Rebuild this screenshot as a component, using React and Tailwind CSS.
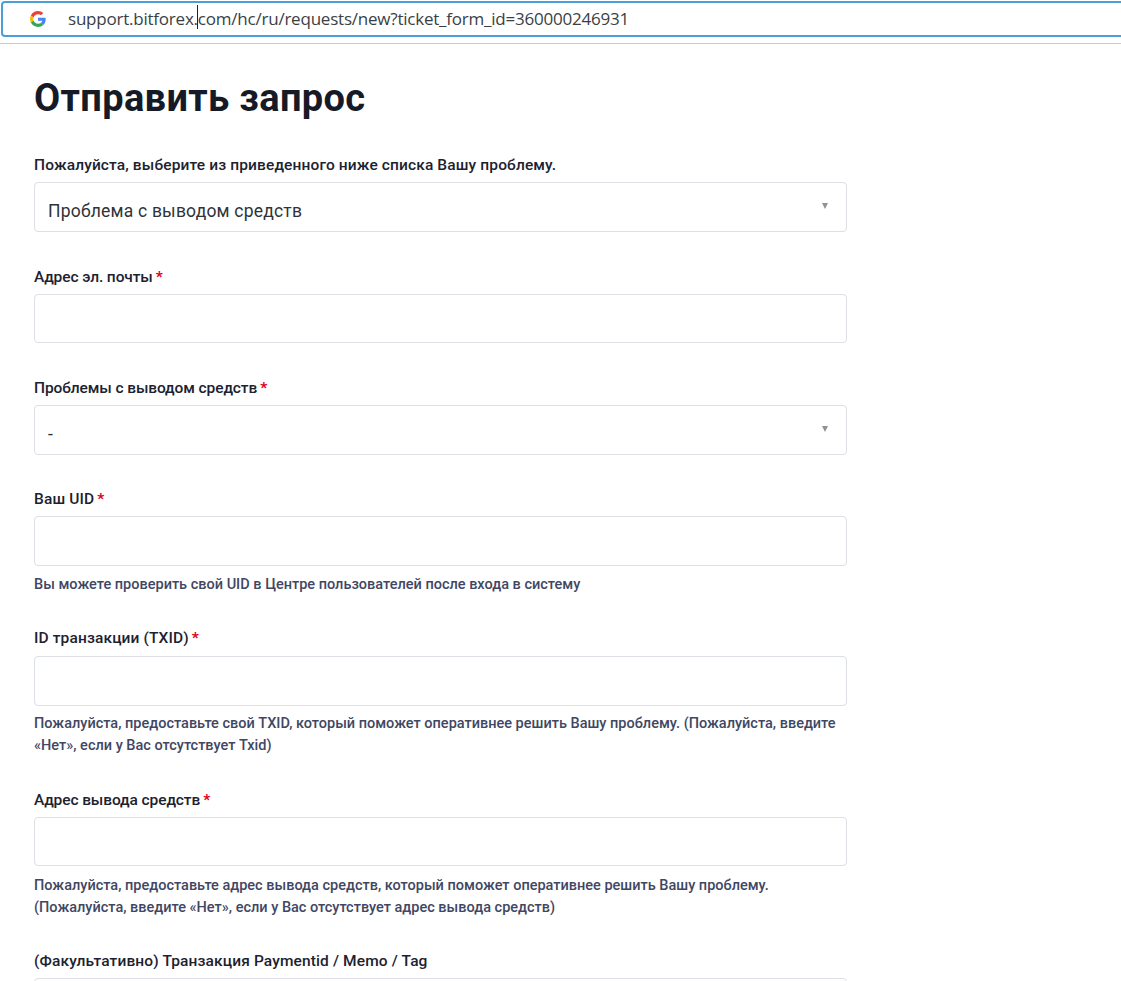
function GoogleIcon() {
  return (
    <svg width="16" height="16" viewBox="0 0 48 48">
      <path fill="#EA4335" d="M24 9.500c3.500 0 6.700 1.300 9.100 3.500l6.800-6.800C35.800 2.400 30.300 0 24 0 14.600 0 6.500 5.400 2.600 13.200l7.900 6.200C12.400 13.700 17.700 9.500 24 9.500z" />
      <path fill="#4285F4" d="M46.900 24.500c0-1.600-.1-3.100-.4-4.500H24v9h12.900c-.6 3-2.200 5.500-4.700 7.200l7.700 6c4.500-4.200 7-10.300 7-17.700z" />
      <path fill="#FBBC05" d="M10.500 28.600c-.5-1.400-.8-3-.8-4.600s.3-3.200.8-4.600l-7.900-6.200C.9 16.500 0 20.100 0 24s.9 7.500 2.600 10.800l7.900-6.200z" />
      <path fill="#34A853" d="M24 48c6.500 0 11.900-2.100 15.900-5.800l-7.700-6c-2.200 1.500-4.900 2.300-8.200 2.300-6.300 0-11.600-4.200-13.500-9.900l-7.900 6.200C6.500 42.600 14.600 48 24 48z" />
    </svg>
  );
}

function Label({ children, required, tight, className = '' }) {
  return (
    <label className={`block text-[15.5px] leading-[18px] font-medium text-[#1c2230] ${tight ? 'tracking-[-0.1px]' : 'tracking-[0.13px]'} ${className}`}>
      {children}
      {required && <span className="ml-[3px] font-bold text-[#e2001a]">*</span>}
    </label>
  );
}

function Input({ className = '' }) {
  return <div className={`w-[813px] border border-[#dcdfe4] rounded-[4px] bg-white ${className}`} />;
}

function Select({ value, className = '' }) {
  return (
    <div className={`w-[813px] h-[50px] border border-[#dcdfe4] rounded-[4px] bg-white flex items-center justify-between pl-[13px] pr-[18px] ${className}`}>
      <span className="pt-[8px] text-[17.5px] text-[#2f3338] tracking-[0.2px]">{value}</span>
      <span className="w-0 h-0 border-x-[3.500px] border-x-transparent border-t-[6px] border-t-[#8f9296] -mt-[2px]" />
    </div>
  );
}

function Hint({ children, className = '' }) {
  return <p className={`text-[14.5px] leading-[22px] font-medium text-[#3f4763] w-[806px] ${className}`}>{children}</p>;
}

export default function App() {
  return (
    <div className="h-[981px] overflow-hidden bg-white font-['Roboto',sans-serif]">
      {/* address bar */}
      <div className="h-[44px] border-b border-[#c4cad6] pt-[1px]">
        <div className="h-[36px] ml-[1px] -mr-2 border-2 border-[#4a9fd8] rounded-[4px] flex items-center pl-[27px]">
          <GoogleIcon />
          <span className="ml-[22px] text-[17px] text-[#3a3f45] font-['Open_Sans',sans-serif] relative whitespace-nowrap tracking-[-0.22px]">
            support.bitforex.com/hc/ru/requests/new?ticket_form_id=360000246931
            <span className="absolute left-[129px] -top-[1px] w-px h-[24px] bg-[#222]" />
          </span>
        </div>
      </div>

      <div className="pl-[34px]">
        <h1 className="mt-[29px] text-[38px] leading-[50px] font-bold text-[#151a26] tracking-[0.35px]">Отправить запрос</h1>

        <Label className="mt-[33px]">Пожалуйста, выберите из приведенного ниже списка Вашу проблему.</Label>
        <Select className="mt-[8px]" value="Проблема с выводом средств" />

        <Label className="mt-[36px]" required tight>Адрес эл. почты</Label>
        <Input className="mt-[8px] h-[49px]" />

        <Label className="mt-[36px]" required tight>Проблемы с выводом средств</Label>
        <Select className="mt-[8px]" value="-" />

        <Label className="mt-[35px]" required>Ваш UID</Label>
        <Input className="mt-[8px] h-[50px]" />
        <Hint className="mt-[8px]">Вы можете проверить свой UID в Центре пользователей после входа в систему</Hint>

        <Label className="mt-[33px]" required>ID транзакции (TXID)</Label>
        <Input className="mt-[9px] h-[50px]" />
        <Hint className="mt-[7px]">Пожалуйста, предоставьте свой TXID, который поможет оперативнее решить Вашу проблему. (Пожалуйста, введите «Нет», если у Вас отсутствует Txid)</Hint>

        <Label className="mt-[34px]" required tight>Адрес вывода средств</Label>
        <Input className="mt-[8px] h-[49px]" />
        <Hint className="mt-[9px]">Пожалуйста, предоставьте адрес вывода средств, который поможет оперативнее решить Вашу проблему.<br />(Пожалуйста, введите «Нет», если у Вас отсутствует адрес вывода средств)</Hint>

        <Label className="mt-[33px]">(Факультативно) Транзакция Paymentid / Memo / Tag</Label>
        <Input className="mt-[8px] h-[50px]" />
      </div>
    </div>
  );
}
